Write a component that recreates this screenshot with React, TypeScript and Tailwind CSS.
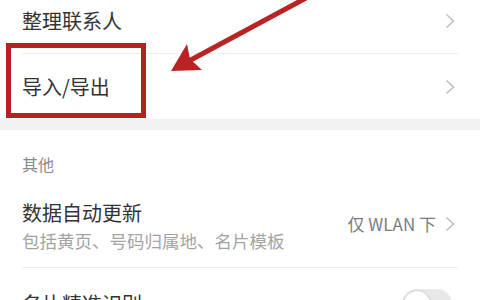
import React from "react";

const Chevron = () => (
  <svg width="10" height="16" viewBox="0 0 10 16" fill="none" className="shrink-0">
    <polyline points="1.5,1.5 8.5,8 1.5,14.5" stroke="#bdbdbd" strokeWidth="1.5" />
  </svg>
);

const Row = ({ title, divider }: { title: string; divider?: boolean }) => (
  <div className="px-[22px]">
    <div
      className={
        "flex h-[65px] items-center justify-between pr-[3px] " +
        (divider ? "border-b border-[#ececec]" : "")
      }
    >
      <span className="text-[20px] text-[#333]">{title}</span>
      <Chevron />
    </div>
  </div>
);

export default function App() {
  return (
    <div className="relative h-[300px] w-[480px] overflow-hidden bg-white font-['Noto_Sans_CJK_SC','Noto_Sans',sans-serif]">
      <div className="-mt-[11px]">
        <Row title="整理联系人" divider />
        <Row title="导入/导出" />

        <div className="h-[11px] bg-[#f2f2f2]" />

        <div className="flex h-[57px] items-center px-[22px] pt-[11px] text-[16px] text-[#8a8a8a]">
          其他
        </div>

        <div className="px-[22px]">
          <div className="flex h-[81px] items-center justify-between border-b border-[#ececec] pr-[3px]">
            <div className="flex flex-col">
              <span className="text-[20px] leading-[28px] text-[#333]">数据自动更新</span>
              <span className="text-[17.5px] leading-[28px] text-[#a3a3a3]">
                包括黄页、号码归属地、名片模板
              </span>
            </div>
            <div className="-mt-[6px] flex items-center gap-[9px]">
              <span className="text-[17px] text-[#7c7c7c]">仅 WLAN 下</span>
              <Chevron />
            </div>
          </div>
        </div>

        <div className="px-[22px]">
          <div className="flex h-[72px] items-center justify-between pr-[6px]">
            <span className="text-[20px] text-[#333]">名片精准识别</span>
            <div className="flex h-[30px] w-[50px] items-center rounded-full bg-[#e8e8e8] p-[1px]">
              <div className="h-[28px] w-[28px] rounded-full border border-[#d6d6d6] bg-white shadow-sm" />
            </div>
          </div>
        </div>
      </div>

      <div className="absolute left-[6px] top-[43px] h-[75px] w-[140px] border-[5px] border-[#b52020]" />

      <svg
        className="absolute left-0 top-0"
        width="480"
        height="300"
        viewBox="0 0 480 300"
        fill="none"
      >
        <line x1="306" y1="-2" x2="187" y2="62" stroke="#b92323" strokeWidth="5" />
        <polygon points="171,71 187,44 190,59 202,70" fill="#b92323" />
      </svg>
    </div>
  );
}
